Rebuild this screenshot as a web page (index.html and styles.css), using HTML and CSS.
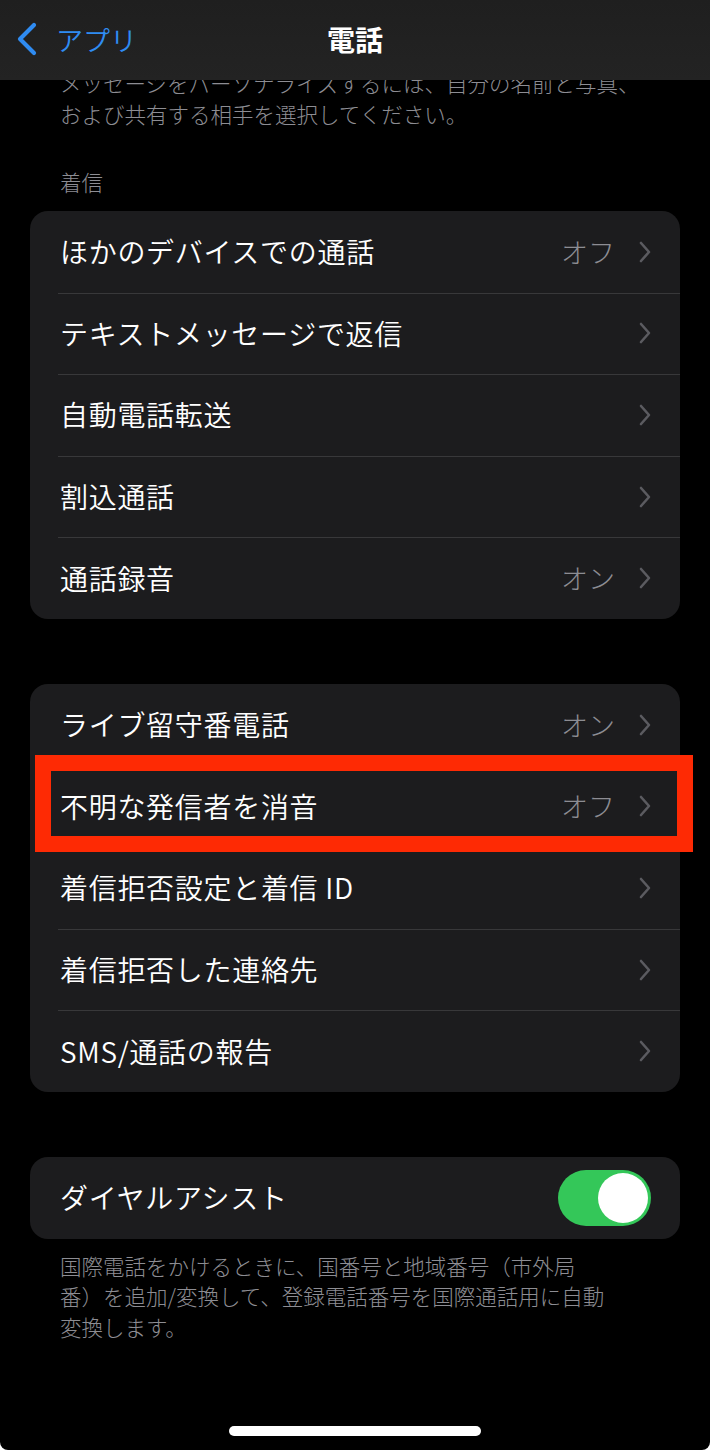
FILE: index.html
```html
<!DOCTYPE html>
<html lang="ja">
<head>
    <meta charset="UTF-8">
    <meta name="viewport" content="width=device-width, initial-scale=1.0">
    <title>電話</title>
    <link rel="stylesheet" href="styles.css">
</head>
<body>
<div class="screen">
    <header class="navbar">
        <a class="back">
            <svg class="back-icon" viewBox="0 0 24 34" width="24" height="34"><path d="M19 3 L5 17 L19 31" fill="none" stroke="#2f8cf2" stroke-width="4.2" stroke-linecap="round" stroke-linejoin="round"/></svg>
            <span>アプリ</span>
        </a>
        <h1 class="title">電話</h1>
    </header>

    <p class="note top-note">メッセージをパーソナライズするには、自分の名前と写真、<br>および共有する相手を選択してください。</p>

    <p class="section-label">着信</p>
    <ul class="group">
        <li class="row"><span class="label">ほかのデバイスでの通話</span><span class="value">オフ</span><svg class="chev" viewBox="0 0 14 22"><path d="M3 2 L11 11 L3 20" /></svg></li>
        <li class="row"><span class="label">テキストメッセージで返信</span><svg class="chev" viewBox="0 0 14 22"><path d="M3 2 L11 11 L3 20" /></svg></li>
        <li class="row"><span class="label">自動電話転送</span><svg class="chev" viewBox="0 0 14 22"><path d="M3 2 L11 11 L3 20" /></svg></li>
        <li class="row"><span class="label">割込通話</span><svg class="chev" viewBox="0 0 14 22"><path d="M3 2 L11 11 L3 20" /></svg></li>
        <li class="row"><span class="label">通話録音</span><span class="value">オン</span><svg class="chev" viewBox="0 0 14 22"><path d="M3 2 L11 11 L3 20" /></svg></li>
    </ul>

    <ul class="group group-spaced marked">
        <li class="row"><span class="label">ライブ留守番電話</span><span class="value">オン</span><svg class="chev" viewBox="0 0 14 22"><path d="M3 2 L11 11 L3 20" /></svg></li>
        <li class="row"><span class="label">不明な発信者を消音</span><span class="value">オフ</span><svg class="chev" viewBox="0 0 14 22"><path d="M3 2 L11 11 L3 20" /></svg></li>
        <li class="row"><span class="label">着信拒否設定と着信 ID</span><svg class="chev" viewBox="0 0 14 22"><path d="M3 2 L11 11 L3 20" /></svg></li>
        <li class="row"><span class="label">着信拒否した連絡先</span><svg class="chev" viewBox="0 0 14 22"><path d="M3 2 L11 11 L3 20" /></svg></li>
        <li class="row"><span class="label">SMS/通話の報告</span><svg class="chev" viewBox="0 0 14 22"><path d="M3 2 L11 11 L3 20" /></svg></li>
        <div class="highlight"></div>
    </ul>

    <ul class="group group-spaced">
        <li class="row"><span class="label">ダイヤルアシスト</span><span class="toggle on"><span class="knob"></span></span></li>
    </ul>
    <p class="note foot-note">国際電話をかけるときに、国番号と地域番号（市外局<br>番）を追加/変換して、登録電話番号を国際通話用に自動<br>変換します。</p>

    <div class="home-bar"></div>
</div>
</body>
</html>
```

FILE: styles.css
```css
html{
    background-color: #fff;
}
body{
    margin: 0;
    font-family: "Noto Sans CJK JP", "Noto Sans", sans-serif;
}
*{
    box-sizing: border-box;
}
.screen{
    position: relative;
    width: 710px;
    height: 1450px;
    background-color: #000;
    border-radius: 0 0 8px 8px;
    overflow: hidden;
    display: flex;
    flex-direction: column;
    padding-top: 68px;
}
.navbar{
    position: absolute;
    top: 0;
    left: 0;
    right: 0;
    height: 80px;
    background: linear-gradient(#1f1f1f, #232323);
    display: flex;
    align-items: center;
    justify-content: center;
    z-index: 2;
}
.back{
    position: absolute;
    left: 15px;
    top: 0;
    height: 80px;
    display: flex;
    align-items: center;
    gap: 17px;
    color: #2f8cf2;
    font-size: 27px;
    font-weight: 350;
    padding-bottom: 2px;
}
.title{
    margin: 0;
    color: #fff;
    font-size: 28px;
    font-weight: 700;
    padding-bottom: 2px;
}
.note{
    margin: 0;
    color: #8d8d93;
    font-size: 21.5px;
    font-weight: 300;
    line-height: 30.5px;
    padding: 0 60px;
    white-space: nowrap;
}
.section-label{
    margin: 38px 0 14px;
    color: #8d8d93;
    font-size: 21.5px;
    font-weight: 300;
    line-height: 30px;
    padding: 0 60px;
}
.group{
    list-style: none;
    margin: 0 30px;
    padding: 0;
    background-color: #1c1c1e;
    border-radius: 18px;
}
.group-spaced{
    margin-top: 65px;
}
.marked{
    position: relative;
}
.row{
    height: 81.6px;
    display: flex;
    align-items: center;
    padding: 0 30px;
    position: relative;
}
.row + .row::before{
    content: "";
    position: absolute;
    top: 0;
    left: 28px;
    right: 0;
    height: 1px;
    background-color: #38383a;
}
.label{
    flex: 1;
    color: #fff;
    font-size: 28px;
    font-weight: 350;
    letter-spacing: 0.7px;
    white-space: nowrap;
    padding-bottom: 1px;
}
.value{
    color: #8d8d93;
    font-size: 27px;
    font-weight: 300;
    margin-right: 23px;
    padding-bottom: 1px;
}
.chev{
    width: 14px;
    height: 22px;
    margin-right: -2px;
}
.chev path{
    fill: none;
    stroke: #5b5b60;
    stroke-width: 2.6;
    stroke-linecap: round;
    stroke-linejoin: round;
}
.highlight{
    position: absolute;
    left: 5px;
    top: 71px;
    width: 658px;
    height: 97px;
    border: 16px solid #fe2a04;
}
.toggle{
    width: 93px;
    height: 56px;
    border-radius: 28px;
    background-color: #34c759;
    display: flex;
    align-items: center;
    padding: 3px;
    margin-right: -1px;
}
.toggle.on{
    justify-content: flex-end;
}
.knob{
    width: 50px;
    height: 50px;
    border-radius: 50%;
    background-color: #fff;
}
.foot-note{
    margin-top: 12px;
}
.home-bar{
    width: 252px;
    height: 10px;
    border-radius: 5px;
    background-color: #fff;
    margin: auto auto 14px;
}
```
